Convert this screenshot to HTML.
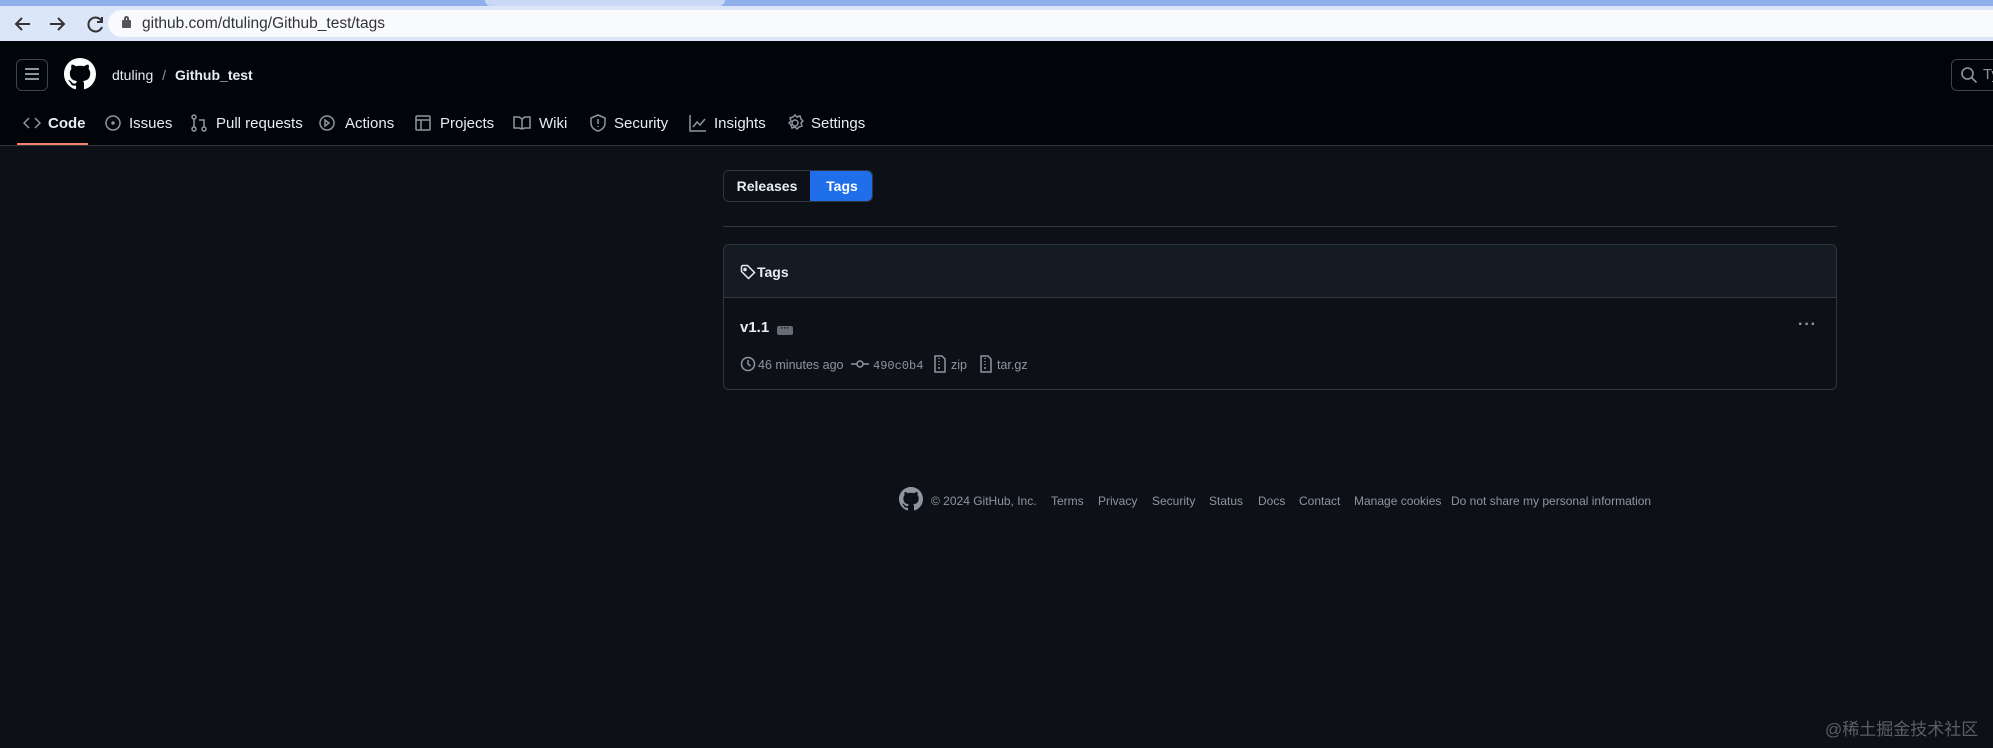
<!DOCTYPE html>
<html><head><meta charset="utf-8"><style>
*{margin:0;padding:0;box-sizing:border-box}
body{width:1993px;height:748px;background:#0d1117;font-family:"Liberation Sans",sans-serif;position:relative;overflow:hidden;color:#e6edf3}
.a{position:absolute;white-space:nowrap}
.nav{font-size:15px;color:#e6edf3;top:115px}
.ic{position:absolute;fill:none;stroke:#8d96a0;stroke-width:1.5}
.meta{font-size:12.5px;color:#8d96a0;top:358px}
.ft{font-size:12px;color:#8d96a0;top:494px}
</style></head><body>
<div class="a" style="left:0;top:0;width:1993px;height:6px;background:#8fb0ea"></div>
<div class="a" style="left:485px;top:0;width:240px;height:6px;background:#c9d9f5;border-radius:0 0 6px 6px"></div>
<div class="a" style="left:0;top:6px;width:1993px;height:35px;background:#dbe6f8"></div>
<div class="a" style="left:108px;top:10px;width:1900px;height:27px;background:#f8fafd;border-radius:14px"></div>
<svg class="a" style="left:10px;top:13px" width="96" height="22" viewBox="0 0 96 22" fill="none" stroke="#333" stroke-width="2"><path d="M20 11H6M12 5l-6 6 6 6"/><path d="M40 11h14M48 5l6 6-6 6"/><path d="M92 9a7 7 0 1 0 0 5"/><path d="M92 4v5h-5"/></svg>
<div class="a" style="left:122px;top:20px;width:9px;height:8px;background:#555;border-radius:1px"></div>
<div class="a" style="left:124px;top:16px;width:5px;height:6px;border:2px solid #555;border-bottom:none;border-radius:3px 3px 0 0"></div>
<div class="a" style="left:142px;top:15px;font-size:15.5px;color:#333">github.com/dtuling/Github_test/tags</div>
<div class="a" style="left:0;top:41px;width:1993px;height:105px;background:#010409;border-bottom:1px solid #30363d"></div>
<div class="a" style="left:16px;top:59px;width:32px;height:32px;border:1px solid #3d444d;border-radius:6px"></div>
<div class="a" style="left:25px;top:68px;width:14px;height:2px;background:#8d96a0;box-shadow:0 5px 0 #8d96a0,0 10px 0 #8d96a0"></div>
<svg class="a" style="left:64px;top:58px" width="32" height="32" viewBox="0 0 16 16"><path fill="#fff" d="M8 0C3.58 0 0 3.58 0 8c0 3.54 2.29 6.53 5.47 7.59.4.07.55-.17.55-.38 0-.19-.01-.82-.01-1.490-2.01.37-2.53-.49-2.69-.94-.09-.23-.48-.94-.82-1.13-.28-.15-.68-.52-.01-.53.63-.01 1.08.58 1.23.82.72 1.21 1.87.87 2.33.66.07-.52.28-.87.51-1.07-1.78-.2-3.64-.89-3.64-3.95 0-.87.31-1.59.82-2.15-.08-.2-.36-1.02.08-2.12 0 0 .67-.21 2.2.82.64-.18 1.32-.27 2-.27.68 0 1.36.09 2 .27 1.53-1.04 2.2-.82 2.2-.82.44 1.1.16 1.92.08 2.12.51.56.82 1.27.82 2.15 0 3.07-1.87 3.75-3.65 3.95.29.25.54.73.54 1.48 0 1.07-.01 1.93-.01 2.2 0 .21.15.46.55.38A8.013 8.013 0 0016 8c0-4.42-3.58-8-8-8z"/></svg>
<div class="a" style="left:112px;top:67px;font-size:14px;color:#e6edf3">dtuling <span style="color:#8d96a0;margin:0 5px">/</span> <b>Github_test</b></div>
<div class="a" style="left:1951px;top:59px;width:60px;height:32px;border:1px solid #3d444d;border-radius:6px"></div>
<svg class="a" style="left:1960px;top:66px" width="18" height="18" viewBox="0 0 18 18" fill="none" stroke="#8d96a0" stroke-width="1.6"><circle cx="7.5" cy="7.5" r="5.5"/><path d="M11.5 11.5l5 5"/></svg>
<div class="a" style="left:1983px;top:66px;font-size:15px;color:#8d96a0">Ty</div>
<!-- nav -->
<svg class="ic" style="left:23px;top:115px" width="18" height="16" viewBox="0 0 18 16"><path d="M6 3L1 8l5 5M12 3l5 5-5 5"/></svg>
<div class="a nav" style="left:48px;font-weight:bold">Code</div>
<div class="a" style="left:17px;top:143px;width:71px;height:2px;background:#f78166"></div>
<svg class="ic" style="left:104px;top:114px" width="18" height="18"><circle cx="9" cy="9" r="7"/><circle cx="9" cy="9" r="1" fill="#8d96a0"/></svg>
<div class="a nav" style="left:129px">Issues</div>
<svg class="ic" style="left:190px;top:114px" width="18" height="18"><circle cx="4" cy="3" r="2"/><circle cx="4" cy="15" r="2"/><circle cx="14" cy="15" r="2"/><path d="M4 5v8M14 13V6H9"/></svg>
<div class="a nav" style="left:216px">Pull requests</div>
<svg class="ic" style="left:318px;top:114px" width="18" height="18"><circle cx="9" cy="9" r="7"/><path d="M7 6l4 3-4 3z"/></svg>
<div class="a nav" style="left:345px">Actions</div>
<svg class="ic" style="left:414px;top:114px" width="18" height="18"><rect x="2" y="2" width="14" height="14" rx="1"/><path d="M2 6h14M7 6v10"/></svg>
<div class="a nav" style="left:440px">Projects</div>
<svg class="ic" style="left:513px;top:115px" width="18" height="16"><path d="M1 2h5l3 2 3-2h5v11h-5l-3 1-3-1H1zM9 4v10"/></svg>
<div class="a nav" style="left:539px">Wiki</div>
<svg class="ic" style="left:589px;top:114px" width="18" height="18"><path d="M9 1l7 3v5c0 4-3 7-7 8-4-1-7-4-7-8V4z"/><path d="M9 5v5M9 12v1"/></svg>
<div class="a nav" style="left:614px">Security</div>
<svg class="ic" style="left:689px;top:114px" width="18" height="18"><path d="M1 1v16h16M4 13l4-5 3 3 5-6"/></svg>
<div class="a nav" style="left:714px">Insights</div>
<svg class="ic" style="left:786px;top:114px" width="18" height="18"><circle cx="9" cy="9" r="3"/><path d="M9 1l2 2 3-1 1 3 2 2-2 2 1 3-3 1-2 2-2-2-3 1-1-3-2-2 2-2-1-3 3-1z"/></svg>
<div class="a nav" style="left:811px">Settings</div>
<!-- content -->
<div class="a" style="left:723px;top:170px;width:150px;height:32px;border:1px solid #30363d;border-radius:6px;overflow:hidden">
<div class="a" style="left:0;top:0;width:86px;height:30px;background:#0d1117;color:#e6edf3;font-size:14px;font-weight:bold;text-align:center;line-height:30px">Releases</div>
<div class="a" style="left:86px;top:0;width:64px;height:30px;background:#1f6feb;color:#fff;font-size:14px;font-weight:bold;text-align:center;line-height:30px">Tags</div>
</div>
<div class="a" style="left:723px;top:226px;width:1114px;height:1px;background:#30363d"></div>
<div class="a" style="left:723px;top:244px;width:1114px;height:146px;border:1px solid #30363d;border-radius:6px;overflow:hidden">
<div class="a" style="left:0;top:0;width:1112px;height:53px;background:#151b23;border-bottom:1px solid #30363d"></div>
</div>
<svg class="ic" style="left:740px;top:264px;stroke:#e6edf3" width="16" height="16"><path d="M1.5 2.5v5l7 7 6-6-7-7h-5z"/><circle cx="5" cy="5.5" r="1"/></svg>
<div class="a" style="left:757px;top:264px;font-size:14px;font-weight:bold">Tags</div>
<div class="a" style="left:740px;top:319px;font-size:15px;font-weight:bold">v1.1</div>
<div class="a" style="left:777px;top:326px;width:16px;height:9px;background:#656c76;border-radius:2px;color:#0d1117;font-size:9px;line-height:4px;text-align:center;font-weight:bold">···</div>
<div class="a" style="left:1798px;top:316px;font-size:16px;color:#9198a1;letter-spacing:1px;font-weight:bold">···</div>
<svg class="ic" style="left:740px;top:356px" width="16" height="16"><circle cx="8" cy="8" r="6.5"/><path d="M8 4v4l2.5 2"/></svg>
<div class="a meta" style="left:758px">46 minutes ago</div>
<svg class="ic" style="left:851px;top:358px" width="18" height="12"><circle cx="9" cy="6" r="3"/><path d="M0 6h6M12 6h6"/></svg>
<div class="a meta" style="left:873px;font-family:'Liberation Mono',monospace;font-size:12px;top:359px">490c0b4</div>
<svg class="ic" style="left:934px;top:355px" width="12" height="18"><path d="M1 1h7l3 3v13H1z"/><path d="M5 3v1M5 6v1M5 9v1M5 12v2"/></svg>
<div class="a meta" style="left:951px">zip</div>
<svg class="ic" style="left:980px;top:355px" width="12" height="18"><path d="M1 1h7l3 3v13H1z"/><path d="M5 3v1M5 6v1M5 9v1M5 12v2"/></svg>
<div class="a meta" style="left:997px">tar.gz</div>
<!-- footer -->
<svg class="a" style="left:899px;top:487px" width="24" height="24" viewBox="0 0 16 16"><path fill="#8d96a0" d="M8 0C3.58 0 0 3.58 0 8c0 3.54 2.290 6.53 5.47 7.59.4.07.55-.17.55-.38 0-.19-.01-.82-.01-1.49-2.01.37-2.53-.49-2.69-.94-.09-.23-.48-.94-.82-1.13-.28-.15-.68-.52-.01-.53.63-.01 1.08.58 1.23.82.72 1.21 1.87.87 2.33.66.07-.52.28-.87.51-1.07-1.78-.2-3.64-.89-3.64-3.95 0-.87.31-1.59.82-2.15-.08-.2-.36-1.02.08-2.12 0 0 .67-.21 2.2.82.64-.18 1.32-.27 2-.27.68 0 1.36.09 2 .27 1.53-1.04 2.2-.82 2.2-.82.44 1.1.16 1.92.08 2.12.51.56.82 1.27.82 2.15 0 3.07-1.87 3.75-3.65 3.95.29.25.54.73.54 1.48 0 1.07-.01 1.93-.01 2.2 0 .21.15.46.55.38A8.013 8.013 0 0016 8c0-4.42-3.58-8-8-8z"/></svg>
<div class="a ft" style="left:931px">© 2024 GitHub, Inc.</div>
<div class="a ft" style="left:1051px">Terms</div>
<div class="a ft" style="left:1098px">Privacy</div>
<div class="a ft" style="left:1152px">Security</div>
<div class="a ft" style="left:1209px">Status</div>
<div class="a ft" style="left:1258px">Docs</div>
<div class="a ft" style="left:1299px">Contact</div>
<div class="a ft" style="left:1354px">Manage cookies</div>
<div class="a ft" style="left:1451px">Do not share my personal information</div>
<div class="a" style="left:1825px;top:715px;font-size:17px;color:#5a5f66;font-family:'Liberation Sans','Noto Sans CJK SC',sans-serif">@稀土掘金技术社区</div>
</body></html>
